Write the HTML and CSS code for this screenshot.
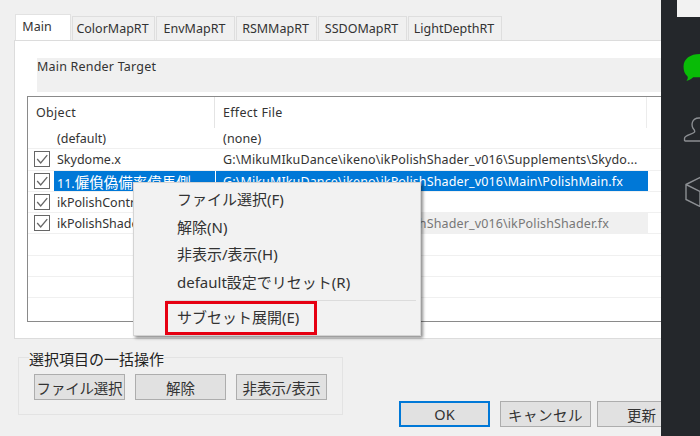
FILE: index.html
```html
<!DOCTYPE html>
<html lang="ja">
<head>
    <meta charset="UTF-8">
    <meta name="viewport" content="width=device-width, initial-scale=1.0">
    <title>Effect Mapping</title>
    <link rel="stylesheet" href="styles.css">
</head>
<body>
    <div class="dialog">
        <div class="tabs">
            <div class="tab active-tab">Main</div>
            <div class="tab tab-color">ColorMapRT</div>
            <div class="tab tab-env">EnvMapRT</div>
            <div class="tab tab-rsm">RSMMapRT</div>
            <div class="tab tab-ssdo">SSDOMapRT</div>
            <div class="tab tab-light">LightDepthRT</div>
        </div>
        <div class="panel">
            <div class="target-label">Main Render Target</div>
            <div class="list">
                <div class="list-head">
                    <div class="head-object">Object</div>
                    <div class="head-file">Effect File</div>
                    <div class="head-end"></div>
                </div>
                <div class="row">
                    <div class="check"></div>
                    <div class="name">(default)</div>
                    <div class="file">(none)</div>
                </div>
                <div class="row">
                    <div class="check"><span class="box"><svg viewBox="0 0 16 16"><path d="M2.5 8l4 4.5L14 3.5" /></svg></span></div>
                    <div class="name">Skydome.x</div>
                    <div class="file">G:\MikuMIkuDance\ikeno\ikPolishShader_v016\Supplements\Skydo...</div>
                </div>
                <div class="row selected">
                    <div class="check"><span class="box"><svg viewBox="0 0 16 16"><path d="M2.5 8l4 4.5L14 3.5" /></svg></span></div>
                    <div class="name">11.<span class="name-jp">僱偩偽備率偉馬側</span></div>
                    <div class="file">G:\MikuMIkuDance\ikeno\ikPolishShader_v016\Main\PolishMain.fx</div>
                </div>
                <div class="row">
                    <div class="check"><span class="box"><svg viewBox="0 0 16 16"><path d="M2.5 8l4 4.5L14 3.5" /></svg></span></div>
                    <div class="name">ikPolishControl.pmx</div>
                    <div class="file"></div>
                </div>
                <div class="row row-grey">
                    <div class="check"><span class="box"><svg viewBox="0 0 16 16"><path d="M2.5 8l4 4.5L14 3.5" /></svg></span></div>
                    <div class="name">ikPolishShader.x</div>
                    <div class="file file-grey">G:\MikuMIkuDance\ikeno\ikPolishShader_v016\ikPolishShader.fx</div>
                </div>
                <div class="row"></div>
                <div class="row"></div>
                <div class="row"></div>
            </div>
        </div>
        <div class="footer">
            <fieldset class="bulk">
                <legend>選択項目の一括操作</legend>
                <div class="bulk-buttons">
                    <button class="btn btn-tight">ファイル選択</button>
                    <button class="btn">解除</button>
                    <button class="btn">非表示/表示</button>
                </div>
            </fieldset>
            <div class="actions">
                <button class="btn btn-ok">OK</button>
                <button class="btn btn-cancel">キャンセル</button>
                <button class="btn btn-update">更新</button>
            </div>
        </div>

        <div class="menu">
            <div class="menu-item">ファイル選択(F)</div>
            <div class="menu-item">解除(N)</div>
            <div class="menu-item">非表示/表示(H)</div>
            <div class="menu-item">default設定でリセット(R)</div>
            <div class="menu-sep"></div>
            <div class="menu-mark">サブセット展開(E)</div>
        </div>
    </div>

    <div class="sidebar">
        <div class="side-thumb"></div>
        <svg class="side-icon icon-chat" viewBox="0 0 30 28"><path fill="#09bb07" d="M17 0c9 0 13 5 13 12s-5 12-13 12H10c-2 2-4 3-7 4 1-2 2-3 1-5-3-2-4-6-4-10C0 5 7 0 17 0z"/></svg>
        <svg class="side-icon icon-user" viewBox="0 0 30 26"><path fill="none" stroke="#8c8f93" stroke-width="1.4" d="M1 25v-3c0-3 8-4 10-6 1-1 0-3-1-4-2-3-2-11 6-11s8 8 6 11c-1 1-2 3-1 4 2 2 8 3 9 6M1 25h30"/></svg>
        <svg class="side-icon icon-cube" viewBox="0 0 30 30"><path fill="none" stroke="#8c8f93" stroke-width="1.4" d="M1 8L15 1l15 7v14l-15 8-14-7zM1 8l14 7 15-7M15 15v15"/></svg>
    </div>
</body>
</html>
```

FILE: styles.css
```css
body {
    margin: 0;
    width: 700px;
    height: 436px;
    display: flex;
    overflow: hidden;
    background-color: #f0f0f0;
    font-family: "Noto Sans", "Noto Sans CJK JP", sans-serif;
    font-size: 12.5px;
    color: #333;
}

.dialog {
    position: relative;
    width: 661px;
    height: 436px;
    overflow: hidden;
    flex-shrink: 0;
    padding-top: 14px;
    box-sizing: border-box;
}

/* tabs */
.tabs {
    display: flex;
    align-items: flex-end;
    height: 26px;
    margin-left: 15px;
}

.tab {
    height: 24px;
    line-height: 23px;
    padding-right: 2px;
    text-align: center;
    box-sizing: border-box;
    background-color: #f0f0f0;
    border: 1px solid #dedede;
    border-bottom: none;
    margin-right: 1px;
    white-space: nowrap;
}

.active-tab {
    width: 56px;
    height: 26px;
    line-height: 24px;
    background-color: #fff;
    border-color: #e2e2e2;
    padding-right: 12px;
}

.tab-color { width: 83px; }
.tab-env { width: 79px; }
.tab-rsm { width: 81px; }
.tab-ssdo { width: 89px; }
.tab-light { width: 94px; }

.panel {
    height: 299px;
    margin-left: 14px;
    box-sizing: border-box;
    background-color: #fff;
    border: 1px solid #dcdcdc;
    border-right: none;
    padding-top: 17px;
    width: 660px;
}

.target-label {
    height: 34px;
    margin-left: 22px;
    background-color: #f0f0f0;
    line-height: 18px;
    letter-spacing: 0.2px;
}

/* object list */
.list {
    margin: 4px 0 0 12px;
    width: 660px;
    height: 226px;
    box-sizing: border-box;
    border: 1px solid #8a8a8a;
    background-color: #fff;
}

.list-head {
    display: flex;
    height: 31px;
    line-height: 32px;
    letter-spacing: 0.3px;
}

.head-object {
    width: 187px;
    padding-left: 8px;
    box-sizing: border-box;
    border-right: 1px solid #e4e4e4;
}

.head-file {
    width: 432px;
    padding-left: 8px;
    box-sizing: border-box;
    border-right: 1px solid #ececec;
}

.row {
    display: flex;
    height: 21.3px;
    line-height: 22px;
    box-sizing: border-box;
    border-bottom: 1px solid #f0f0f0;
    white-space: nowrap;
}

.row .check {
    width: 26px;
    flex-shrink: 0;
    display: flex;
    align-items: center;
    padding-left: 6px;
    box-sizing: border-box;
}

.box {
    width: 16px;
    height: 16px;
    box-sizing: border-box;
    border: 1px solid #666;
    background-color: #fff;
    display: block;
}

.box svg {
    display: block;
    width: 14px;
    height: 14px;
    fill: none;
    stroke: #666;
    stroke-width: 1.5;
}

.row .name {
    width: 162px;
    padding-left: 3px;
    box-sizing: border-box;
    overflow: hidden;
    flex-shrink: 0;
}

.name-jp {
    font-size: 14.5px;
}

.row .file {
    width: 432px;
    padding-left: 7px;
    box-sizing: border-box;
    overflow: hidden;
    letter-spacing: 0.13px;
}

.selected .name,
.selected .file {
    background-color: #0078d7;
    color: #fff;
}

.selected .name {
    border-right: 1px solid #fff;
}

.row-grey .file {
    background-color: #f0f0f0;
}

.file-grey {
    color: #777;
}

/* bottom part */
.footer {
    display: flex;
    align-items: flex-start;
    margin: 7px 0 0 18px;
}

.bulk {
    width: 325px;
    height: 69px;
    margin: 0;
    padding: 0 0 0 15px;
    box-sizing: border-box;
    border: 1px solid #e3e3e3;
    flex-shrink: 0;
}

.bulk legend {
    padding: 4px 0 0 0;
    margin-left: -5px;
    font-size: 15px;
    line-height: 18px;
    color: #222;
}

.bulk-buttons {
    display: flex;
    gap: 10px;
    margin-top: 6px;
}

.btn {
    width: 91px;
    height: 26px;
    padding: 0;
    font-family: inherit;
    font-size: 14.5px;
    color: #333;
    background-color: #e1e1e1;
    border: 1px solid #adadad;
    white-space: nowrap;
}

.btn-tight {
    letter-spacing: -0.2px;
}

.actions {
    display: flex;
    margin: 55px 0 0 56px;
    flex-shrink: 0;
}

.btn-ok {
    border: 2px solid #0078d7;
    margin-right: 10px;
}

.btn-cancel {
    margin-right: 6px;
    letter-spacing: 0.5px;
}

.btn-update {
    text-align: left;
    padding-left: 29px;
}

/* context menu */
.menu {
    position: absolute;
    left: 133px;
    top: 182px;
    width: 288px;
    height: 154px;
    box-sizing: border-box;
    background-color: #f2f2f2;
    border: 1px solid #d4d4d4;
    box-shadow: 2px 2px 3px rgba(0, 0, 0, 0.45);
    padding-top: 3px;
}

.menu-item {
    height: 27.6px;
    line-height: 27px;
    padding-left: 43px;
    font-size: 15px;
    color: #333;
    white-space: nowrap;
}

.menu-sep {
    height: 1px;
    margin: 4px 4px 0 32px;
    background-color: #dcdcdc;
}

.menu-mark {
    width: 152px;
    height: 34px;
    margin-left: 31px;
    box-sizing: border-box;
    border: 3px solid #e60012;
    padding-left: 9px;
    line-height: 26px;
    font-size: 15px;
    white-space: nowrap;
}

/* dark strip on the right */
.sidebar {
    width: 39px;
    height: 436px;
    flex-shrink: 0;
    background-color: #24272b;
    overflow: hidden;
    display: flex;
    flex-direction: column;
}

.side-thumb {
    width: 23px;
    height: 17px;
    margin-left: 16px;
    background-color: #f2f2f2;
}

.side-icon {
    flex-shrink: 0;
    display: block;
    margin-left: 22px;
}

.icon-chat {
    width: 30px;
    height: 27px;
    margin-top: 37px;
}

.icon-user {
    width: 30px;
    height: 25px;
    margin-top: 36px;
}

.icon-cube {
    width: 30px;
    height: 31px;
    margin-top: 34px;
    margin-left: 24px;
}
```
